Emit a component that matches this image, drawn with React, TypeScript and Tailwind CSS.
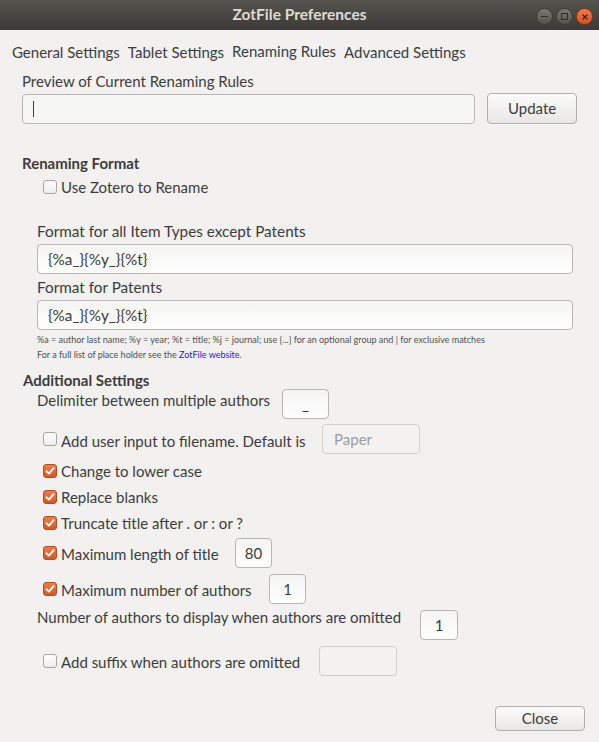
import React from "react";

// Ubuntu-style GTK checkbox
function Check({ checked }: { checked?: boolean }) {
  if (checked) {
    return (
      <span className="flex h-[14px] w-[14px] shrink-0 items-center justify-center rounded-[3px] border border-[#b84a22] bg-gradient-to-b from-[#f27b4b] to-[#d9551f]">
        <svg width="10" height="10" viewBox="0 0 10 10">
          <path d="M1.5 5.2 L4 7.6 L8.6 2.2" fill="none" stroke="#ffffff" strokeWidth="1.9" strokeLinecap="round" strokeLinejoin="round" />
        </svg>
      </span>
    );
  }
  return (
    <span className="block h-[14px] w-[14px] shrink-0 rounded-[3px] border border-[#a8a6a2] bg-gradient-to-b from-[#ffffff] to-[#eeedeb]" />
  );
}

function Field({
  value,
  className = "",
  muted,
  children,
}: {
  value?: string;
  className?: string;
  muted?: boolean;
  children?: React.ReactNode;
}) {
  return (
    <div
      className={
        "flex h-[30px] items-center rounded-[4px] border " +
        (muted
          ? "border-[#d3d1ce] bg-[#f3f2f1] text-[#9c9c9a] "
          : "border-[#b8b6b2] bg-gradient-to-b from-[#f4f4f3] to-[#ffffff] text-[#3c3c3c] ") +
        className
      }
    >
      {value}
      {children}
    </div>
  );
}

function Button({ label }: { label: string }) {
  return (
    <button className="flex h-[31px] w-[90px] items-center justify-center rounded-[4px] border border-[#b3b1ad] bg-gradient-to-b from-[#fbfbfa] to-[#e8e7e5] text-[15px] text-[#3c3c3c] shadow-[0_1px_0_rgba(255,255,255,0.6)]">
      {label}
    </button>
  );
}

export default function App() {
  return (
    <div
      className="flex h-[742px] w-[599px] flex-col bg-[#f2f1f0] text-[#3c3c3c]"
      style={{ fontFamily: "Lato, 'Noto Sans', sans-serif" }}
    >
      {/* title bar */}
      <div className="relative flex h-[30px] shrink-0 items-center justify-center bg-gradient-to-b from-[#56544f] to-[#3b3a36]">
        <span className="text-[15.5px] font-bold text-[#dfdbd2]">ZotFile Preferences</span>
        <div className="absolute right-[6px] top-[8px] flex gap-[3px]">
          <span className="flex h-[17px] w-[17px] items-center justify-center rounded-full border border-[#3a3935] bg-gradient-to-b from-[#7a7873] to-[#55534e]">
            <span className="block h-[1.5px] w-[7px] bg-[#2f2e2b]" />
          </span>
          <span className="flex h-[17px] w-[17px] items-center justify-center rounded-full border border-[#3a3935] bg-gradient-to-b from-[#7a7873] to-[#55534e]">
            <span className="block h-[7px] w-[7px] border border-[#2f2e2b]" />
          </span>
          <span className="flex h-[17px] w-[17px] items-center justify-center rounded-full border border-[#8a3516] bg-gradient-to-b from-[#f47a4b] to-[#dc4f1c]">
            <svg width="8" height="8" viewBox="0 0 8 8">
              <path d="M1.5 1.5 L6.5 6.5 M6.5 1.5 L1.5 6.5" stroke="#3a2a22" strokeWidth="1.3" />
            </svg>
          </span>
        </div>
      </div>

      {/* tabs */}
      <div className="flex gap-[8px] pl-[12px] pt-[13px] text-[15px] leading-[18px]">
        <span>General Settings</span>
        <span>Tablet Settings</span>
        <span className="-translate-y-[1px]">Renaming Rules</span>
        <span>Advanced Settings</span>
      </div>

      <div className="flex flex-1 flex-col">
        <div className="pl-[22px] pr-[22px] pt-[11px]">
          <div className="text-[15px] leading-[18px]">Preview of Current Renaming Rules</div>
          <div className="mt-[3px] flex items-center gap-[12px]">
            <Field className="w-[454px] bg-none !bg-[#f6f6f5] pl-[10px]">
              <span className="block h-[16px] w-[1px] bg-[#3c3c3c]" />
            </Field>
            <Button label="Update" />
          </div>
        </div>

        <div className="pl-[22px] pt-[30px] text-[15px] font-bold leading-[18px]">Renaming Format</div>
        <label className="ml-[43px] mt-[6px] flex items-center gap-[4px] text-[15px] leading-[18px]">
          <Check />
          <span>Use Zotero to Rename</span>
        </label>

        <div className="pl-[37px] pr-[26px] pt-[26px] text-[15.3px] leading-[18px]">
          <div>Format for all Item Types except Patents</div>
          <Field className="mt-[4px] pl-[10px]" value="{%a_}{%y_}{%t}" />
          <div className="mt-[4px]">Format for Patents</div>
          <Field className="mt-[4px] pl-[10px]" value="{%a_}{%y_}{%t}" />
          <div className="mt-[2px] text-[9px] leading-[15px] text-[#505050]">
            <div>
              %a = author last name; %y = year; %t = title; %j = journal; use {"{...}"} for an optional group and | for exclusive matches
            </div>
            <div>
              For a full list of place holder see the <span className="text-[#2020e8]">ZotFile website</span>.
            </div>
          </div>
        </div>

        <div className="pl-[23px] pt-[9px] text-[15px] font-bold leading-[18px]">Additional Settings</div>

        <div className="flex flex-col text-[15px] leading-[18px]">
          <div className="ml-[37px] flex items-start">
            <span className="mt-[2px] w-[245px]">Delimiter between multiple authors</span>
            <Field className="w-[47px] justify-center" value="_" />
          </div>

          <div className="ml-[43px] mt-[5px] flex items-center">
            <Check />
            <span className="ml-[4px] mt-[3px] w-[261px]">Add user input to filename. Default is</span>
            <Field muted className="w-[98px] pl-[11px]" value="Paper" />
          </div>

          <div className="ml-[43px] mt-[8px] flex items-center gap-[4px]">
            <Check checked />
            <span>Change to lower case</span>
          </div>
          <div className="ml-[43px] mt-[8px] flex items-center gap-[4px]">
            <Check checked />
            <span>Replace blanks</span>
          </div>
          <div className="ml-[43px] mt-[8px] flex items-center gap-[4px]">
            <Check checked />
            <span>Truncate title after . or : or ?</span>
          </div>

          <div className="ml-[43px] mt-[6px] flex items-center">
            <Check checked />
            <span className="ml-[4px] mt-[2px] w-[174px]">Maximum length of title</span>
            <Field className="w-[37px] justify-center" value="80" />
          </div>
          <div className="ml-[43px] mt-[6px] flex items-center">
            <Check checked />
            <span className="ml-[4px] mt-[2px] w-[208px]">Maximum number of authors</span>
            <Field className="w-[37px] justify-center" value="1" />
          </div>

          <div className="ml-[37px] mt-[6px] flex items-start">
            <span className="-mt-[2px] w-[383px]">Number of authors to display when authors are omitted</span>
            <Field className="w-[38px] justify-center" value="1" />
          </div>

          <div className="ml-[43px] mt-[6px] flex items-center">
            <Check />
            <span className="ml-[4px] mt-[2px] w-[258px]">Add suffix when authors are omitted</span>
            <Field muted className="w-[78px]" value="" />
          </div>
        </div>

        <div className="mt-auto flex justify-end pb-[11px] pr-[14px]">
          <button className="flex h-[25px] w-[90px] items-center justify-center rounded-[4px] border border-[#b3b1ad] bg-gradient-to-b from-[#fbfbfa] to-[#e8e7e5] text-[15px] text-[#3c3c3c]">
            Close
          </button>
        </div>
      </div>
    </div>
  );
}
